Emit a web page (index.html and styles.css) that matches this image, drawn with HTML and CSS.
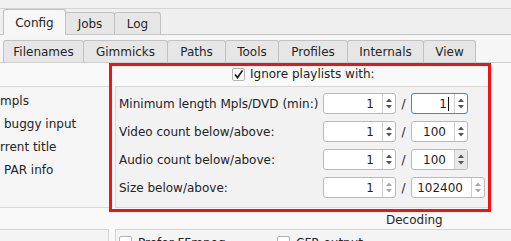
FILE: index.html
```html
<!DOCTYPE html>
<html lang="en">
<head>
  <meta charset="UTF-8">
  <title>Config</title>
  <link rel="stylesheet" href="styles.css">
</head>
<body>
  <div class="topstrip"></div>

  <nav class="tabs tabs-main">
    <a class="tab active">Config</a>
    <a class="tab">Jobs</a>
    <a class="tab">Log</a>
  </nav>

  <div class="pane">
    <nav class="tabs tabs-sub">
      <a class="tab">Filenames</a>
      <a class="tab">Gimmicks</a>
      <a class="tab">Paths</a>
      <a class="tab">Tools</a>
      <a class="tab">Profiles</a>
      <a class="tab">Internals</a>
      <a class="tab">View</a>
    </nav>

    <div class="page">
      <div class="row-top">
        <div class="left-group">
          <div class="opt">mpls</div>
          <div class="opt indent">buggy input</div>
          <div class="opt">rrent title</div>
          <div class="opt indent">PAR info</div>
        </div>

        <div class="highlight">
          <div class="group-title">
            <span class="check checked"><svg width="11" height="11" viewBox="0 0 11 11"><path d="M2 5.5 L4.5 8.5 L9.5 1.5" fill="none" stroke="#1e1e1e" stroke-width="1.7"/></svg></span>
            Ignore playlists with:
          </div>
          <div class="frame">
            <div class="form">
              <div class="label">Minimum length Mpls/DVD (min:)</div>
              <div class="spin"><span class="val">1</span><span class="arrows"><svg width="12" height="19" viewBox="0 0 12 19"><path d="M3 8 L6 4.5 L9 8Z M3 11 L6 14.5 L9 11Z"/></svg></span></div>
              <div class="slash">/</div>
              <div class="spin short focus"><span class="val">1<i class="cursor"></i></span><span class="arrows"><svg width="12" height="19" viewBox="0 0 12 19"><path d="M3 8 L6 4.5 L9 8Z M3 11 L6 14.5 L9 11Z"/></svg></span></div>

              <div class="label">Video count below/above:</div>
              <div class="spin"><span class="val">1</span><span class="arrows"><svg width="12" height="19" viewBox="0 0 12 19"><path d="M3 8 L6 4.5 L9 8Z M3 11 L6 14.5 L9 11Z"/></svg></span></div>
              <div class="slash">/</div>
              <div class="spin short"><span class="val">100</span><span class="arrows"><svg width="12" height="19" viewBox="0 0 12 19"><path d="M3 8 L6 4.5 L9 8Z M3 11 L6 14.5 L9 11Z"/></svg></span></div>

              <div class="label">Audio count below/above:</div>
              <div class="spin"><span class="val">1</span><span class="arrows"><svg width="12" height="19" viewBox="0 0 12 19"><path d="M3 8 L6 4.5 L9 8Z M3 11 L6 14.5 L9 11Z"/></svg></span></div>
              <div class="slash">/</div>
              <div class="spin short hover"><span class="val">100</span><span class="arrows"><svg width="12" height="19" viewBox="0 0 12 19"><path d="M3 8 L6 4.5 L9 8Z M3 11 L6 14.5 L9 11Z"/></svg></span></div>

              <div class="label">Size below/above:</div>
              <div class="spin dim"><span class="val">1</span><span class="arrows"><svg width="12" height="19" viewBox="0 0 12 19"><path d="M3 8 L6 4.5 L9 8Z M3 11 L6 14.5 L9 11Z"/></svg></span></div>
              <div class="slash">/</div>
              <div class="spin wide dim"><span class="val">102400</span><span class="arrows"><svg width="12" height="19" viewBox="0 0 12 19"><path d="M3 8 L6 4.5 L9 8Z M3 11 L6 14.5 L9 11Z"/></svg></span></div>
            </div>
          </div>
        </div>
      </div>

      <div class="decoding-title">Decoding</div>

      <div class="row-bottom">
        <div class="box box-left"></div>
        <div class="box box-decoding">
          <label class="cb first"><span class="check"></span>Prefer FFmpeg</label>
          <label class="cb"><span class="check"></span>CFR output</label>
        </div>
      </div>
    </div>
  </div>
</body>
</html>
```

FILE: styles.css
```css
* { margin: 0; padding: 0; box-sizing: border-box; }
body { width: 511px; height: 241px; overflow: hidden; background: #efefef; color: #232323; font-family: 'DejaVu Sans', sans-serif; font-size: 12px; }

.topstrip { height: 9px; background: #f1f1f1; border-bottom: 1px solid #d4d4d4; }

.tabs { display: flex; align-items: flex-end; padding-left: 3px; }
.tab { display: flex; align-items: center; justify-content: center; padding: 0; background: #e6e6e6; border: 1px solid #c2c2c2; border-bottom: none; border-radius: 3px 3px 0 0; margin-right: -1px; color: #262626; white-space: nowrap; }
.tabs-main { height: 26px; border-bottom: 1px solid #c6c6c6; }
.tabs-main .tab { height: 22px; padding-top: 1px; }
.tabs-main .tab.active { height: 26px; margin-bottom: -1px; background: #f7f7f7; position: relative; z-index: 1; padding-top: 1px; }
.tabs-main .tab:nth-child(1) { width: 63px; }
.tabs-main .tab:nth-child(2) { width: 50px; }
.tabs-main .tab:nth-child(3) { width: 47px; }

.pane { background: #f6f6f6; padding-top: 5px; height: 206px; }
.tabs-sub { height: 23px; border-bottom: 1px solid #d0d0d0; }
.tabs-sub .tab { height: 22px; padding-top: 1px; }
.tabs-sub .tab:nth-child(1) { width: 81px; }
.tabs-sub .tab:nth-child(2) { width: 85px; }
.tabs-sub .tab:nth-child(3) { width: 59px; }
.tabs-sub .tab:nth-child(4) { width: 54px; }
.tabs-sub .tab:nth-child(5) { width: 70px; }
.tabs-sub .tab:nth-child(6) { width: 77px; }
.tabs-sub .tab:nth-child(7) { width: 53px; }

.page { background: #f9f9f9; height: 178px; }

.row-top { display: flex; align-items: flex-start; }
.left-group { width: 109px; margin-top: 23px; height: 122px; border-top: 1px solid #d8d8d8; border-bottom: 1px solid #d8d8d8; background: #f5f5f5; padding-top: 3px; }
.opt { line-height: 23px; white-space: nowrap; }
.opt.indent { padding-left: 4px; }

.highlight { width: 382px; height: 149px; border: 3px solid #f21212; }
.group-title { height: 20px; display: flex; align-items: flex-start; padding: 2px 0 0 120px; line-height: 13px; gap: 5px; }
.check { display: inline-flex; align-items: center; justify-content: center; width: 13px; height: 13px; background: #fff; border: 1px solid #b4b4b4; border-radius: 2px; flex: none; }

.frame { margin-left: 3px; height: 122px; border: 1px solid #d8d8d8; border-right: none; background: #f2f2f2; padding: 6px 0 0 3px; }
.form { display: grid; grid-template-columns: 204px 73px 15px auto; row-gap: 7px; align-items: center; }
.label { white-space: nowrap; }
.slash { text-align: center; }

.spin { display: flex; height: 21px; background: #fff; border: 1px solid #b9b9b9; border-radius: 3px; overflow: hidden; }
.spin.short { width: 57px; }
.spin.wide { width: 74px; }
.spin .val { flex: 1; display: flex; align-items: center; justify-content: flex-end; padding-right: 8px; color: #1e1e1e; }
.spin .arrows { width: 13px; border-left: 1px solid #cfcfcf; display: flex; align-items: center; justify-content: center; fill: #555; }
.spin.focus { border-color: #3a8bcb; }
.spin.focus .val { padding-right: 5px; }
.cursor { display: inline-block; width: 1px; height: 14px; background: #111; margin-left: 1px; }
.spin.hover .arrows { background: #e8e8e8; }
.spin.dim .arrows { fill: #a9a9a9; }

.decoding-title { height: 17px; line-height: 16px; padding-left: 386px; color: #262626; }

.row-bottom { display: flex; gap: 6px; height: 12px; }
.box { border-top: 1px solid #d4d4d4; background: #f4f4f4; }
.box-left { width: 109px; border-right: 1px solid #d4d4d4; }
.box-decoding { flex: 1; border-left: 1px solid #d4d4d4; display: flex; padding: 6px 0 0 3px; }
.cb { display: flex; align-items: flex-start; gap: 6px; line-height: 14px; white-space: nowrap; }
.cb.first { width: 158px; }
```
